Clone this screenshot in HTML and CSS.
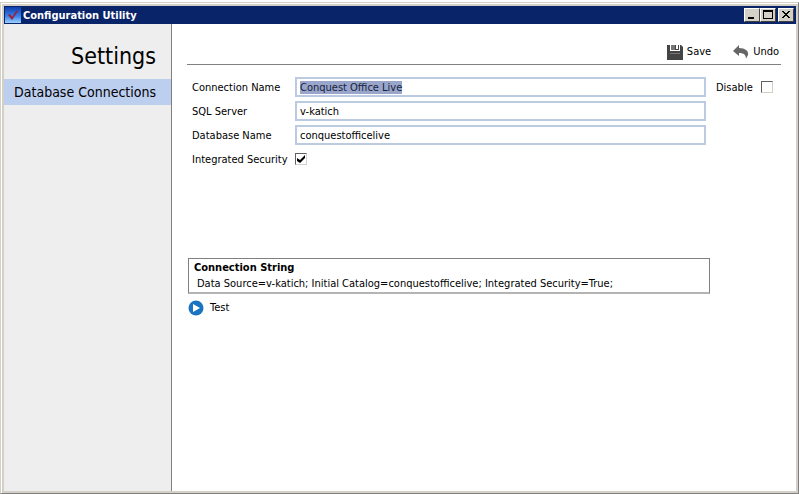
FILE: index.html
```html
<!DOCTYPE html>
<html lang="en">
<head>
  <meta charset="UTF-8" />
  <meta name="viewport" content="width=device-width, initial-scale=1.0" />
  <title>Configuration Utility</title>
  <link rel="stylesheet" href="styles.css">
</head>
<body>
  <div class="window">
    <header class="titlebar">
      <svg class="app-icon" viewBox="0 0 16 16" aria-hidden="true">
        <defs>
          <linearGradient id="appBlue" x1="0" y1="0" x2="0" y2="1">
            <stop offset="0" stop-color="#0f3cae" />
            <stop offset="0.6" stop-color="#3f86ea" />
            <stop offset="1" stop-color="#9fd0ff" />
          </linearGradient>
        </defs>
        <rect width="16" height="16" fill="url(#appBlue)" />
        <path d="M3 8l2-1 2 3 5-7 1 1-6 9z" fill="#9c2034" />
      </svg>
      <h1>Configuration Utility</h1>
      <div class="window-buttons">
        <button type="button" class="win-btn" aria-label="Minimize">
          <svg viewBox="0 0 12 10"><path d="M2 7h6v2H2z" /></svg>
        </button>
        <button type="button" class="win-btn" aria-label="Maximize">
          <svg viewBox="0 0 12 10"><path fill-rule="evenodd" d="M1 0h10v9H1zM2 2v6h8V2z" /></svg>
        </button>
        <button type="button" class="win-btn win-close" aria-label="Close">
          <svg viewBox="0 0 12 10" shape-rendering="crispEdges">
            <path d="M2 1h2v1h1v1h2V2h1V1h2v1H9v1H8v1H7v1h1v1h1v1h1v1H8V7H7V6H5v1H4v1H2V7h1V6h1V5h1V4H4V3H3V2H2z" />
          </svg>
        </button>
      </div>
    </header>

    <div class="client">
      <nav class="sidebar">
        <h2>Settings</h2>
        <a href="#connections" class="nav-item active">Database Connections</a>
      </nav>

      <main class="content" id="connections">
        <div class="toolbar">
          <button type="button" class="tool">
            <svg class="icon" viewBox="0 0 16 16" fill="#444" aria-hidden="true">
              <path d="M0 1h3v6h10V1h1l2 2v13H0z" />
              <path d="M4 1h4v5H4z" fill="#777" />
              <path d="M8 1h1v4h2V1h1v5H8z" />
              <path d="M3 9h10v1H3z" fill="#777" />
            </svg>
            Save
          </button>
          <button type="button" class="tool">
            <svg class="icon" viewBox="0 0 16 16" fill="#666" aria-hidden="true">
              <path d="M6 1v3c6 0 10 3 9 7-1 2-2 3-2 4 0-4-2-6-7-6v3L0 7z" />
            </svg>
            Undo
          </button>
        </div>

        <form class="form">
          <label for="connName">Connection Name</label>
          <input type="text" id="connName" value="Conquest Office Live" />
          <div class="disable">
            <label for="disable">Disable</label>
            <input type="checkbox" id="disable" />
          </div>

          <label for="server">SQL Server</label>
          <input type="text" id="server" value="v-katich" />

          <label for="dbName">Database Name</label>
          <input type="text" id="dbName" value="conquestofficelive" />

          <label for="security">Integrated Security</label>
          <input type="checkbox" id="security" checked />
        </form>

        <section class="connection-string">
          <h3>Connection String</h3>
          <p>Data Source=v-katich; Initial Catalog=conquestofficelive; Integrated Security=True;</p>
        </section>

        <button type="button" class="tool test">
          <svg class="icon" viewBox="0 0 16 16" aria-hidden="true">
            <circle cx="8" cy="8" r="7.500" fill="#1b74c0" />
            <path d="M5 4l7 4-7 4z" fill="#fff" />
          </svg>
          Test
        </button>
      </main>
    </div>
  </div>

  <script>
    const connName = document.getElementById('connName');
    connName.focus();
    connName.select();
  </script>
</body>
</html>
```

FILE: styles.css
```css
* {
  box-sizing: border-box;
}
body {
  margin: 0;
  padding-top: 2px;
  min-height: 100vh;
  display: flex;
  background: #fff;
  color: #000;
  font-family: "DejaVu Sans Condensed", "DejaVu Sans", sans-serif;
  font-size: 11px;
  line-height: 14px;
}
h1, h2, h3, p {
  margin: 0;
}
button, input {
  font: inherit;
  color: inherit;
}
.window {
  flex: 1;
  display: flex;
  flex-direction: column;
  border: 1px solid;
  border-color: #d4d0c8 #808080 #808080 #d4d0c8;
  box-shadow: inset 1px 1px #fff;
  padding: 3px 2px 2px 3px;
  background: #d4d0c8;
  background-clip: padding-box;
}

/* title bar */
.titlebar {
  display: flex;
  align-items: center;
  height: 18px;
  padding: 0 2px 0 1px;
  background: #0a246a;
  color: #fff;
}
.app-icon {
  width: 16px;
  height: 16px;
  margin-right: 2px;
}
.titlebar h1 {
  flex: 1;
  padding-top: 1px;
  font-size: 11px;
  font-weight: bold;
}
.window-buttons {
  display: flex;
}
.win-btn {
  width: 16px;
  height: 14px;
  padding: 1px;
  border: 1px solid;
  border-color: #fff #404040 #404040 #fff;
  background: #d4d0c8;
}
.win-btn svg {
  display: block;
  width: 12px;
  height: 10px;
}
.win-close {
  margin-left: 2px;
}

/* client area */
.client {
  flex: 1;
  display: flex;
}
.sidebar {
  width: 168px;
  border-right: 1px solid #808080;
  background: #eee;
  text-align: right;
}
.sidebar h2 {
  padding: 17px 15px 8px;
  font-size: 23px;
  font-weight: normal;
  line-height: 30px;
}
.nav-item {
  display: block;
  padding: 3px 15px 3px 0;
  background: #bccfef;
  color: #000;
  font-size: 14px;
  line-height: 20px;
  text-decoration: none;
}
.content {
  flex: 1;
  padding: 18px 15px 0;
  background: #fff;
}
.toolbar {
  display: flex;
  justify-content: flex-end;
  gap: 22px;
  padding: 1px 2px 3px;
  border-bottom: 1px solid #808080;
}
.tool {
  display: flex;
  align-items: center;
  gap: 4px;
  padding: 1px 0;
  border: 0;
  background: none;
  line-height: 16px;
}
.icon {
  width: 16px;
  height: 16px;
}

/* connection form */
.form {
  display: grid;
  grid-template-columns: 97px minmax(0, 411px) 61px;
  grid-auto-rows: 20px;
  align-items: center;
  gap: 4px 6px;
  padding: 12px 4px 0 5px;
}
.form label {
  padding-top: 1px;
  white-space: nowrap;
}
.form > label {
  grid-column: 1;
}
.form input[type="text"] {
  width: 100%;
  height: 20px;
  padding: 0 3px;
  border: 2px solid #bccae2;
  background: #fff;
  outline: none;
}
.form input[type="text"]::selection {
  background: #99a6ca;
  color: #14213d;
}
.disable {
  display: flex;
  align-items: center;
  justify-content: space-between;
  padding-left: 4px;
}
input[type="checkbox"] {
  appearance: none;
  width: 12px;
  height: 12px;
  margin: 0;
  border: 1px solid;
  border-color: #606060 #d4d0c8 #d4d0c8 #606060;
  background: #fff;
}
input[type="checkbox"]:checked {
  background: #fff url("data:image/svg+xml,%3Csvg xmlns='http://www.w3.org/2000/svg' viewBox='0 0 10 10'%3E%3Cpath d='M1 4l3 2 5-5v3L4 9 1 7z'/%3E%3C/svg%3E") center / 10px 10px no-repeat;
}

.connection-string {
  max-width: 522px;
  margin: 89px 0 0 1px;
  padding: 1px 5px;
  border: 1px solid #808080;
  border-bottom: 2px solid #b4b4b4;
}
.connection-string h3 {
  font-size: 11px;
  line-height: 16px;
}
.connection-string p {
  padding-left: 3px;
  line-height: 15px;
}
.test {
  margin-top: 5px;
  margin-left: 1px;
  gap: 6px;
}
```
